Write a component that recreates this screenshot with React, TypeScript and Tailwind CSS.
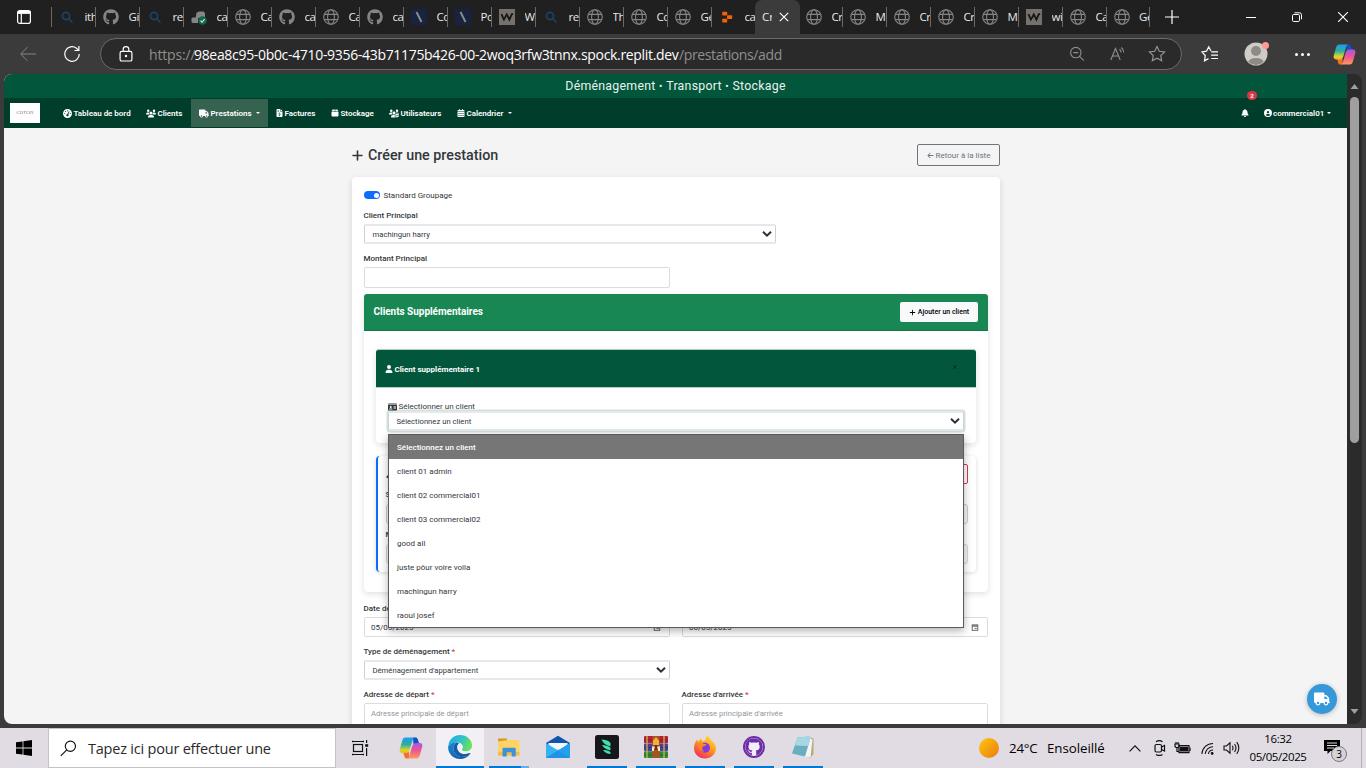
import React from 'react';
import {
  FaPlus, FaArrowLeft, FaTruck, FaGaugeHigh, FaUsers, FaFileInvoiceDollar, FaBox,
  FaUsersGear, FaCalendarDays, FaBell, FaCircleUser, FaUser, FaIdCard, FaGithub,
} from 'react-icons/fa6';

const UI = "font-['Open_Sans','Noto_Sans',sans-serif]";

/* ---------- browser icons ---------- */

function Globe() {
  return (
    <svg viewBox="0 0 16 16" className="size-4" fill="none" stroke="#858585" strokeWidth="1.1">
      <circle cx="8" cy="8" r="7.3" />
      <ellipse cx="8" cy="8" rx="3.4" ry="7.3" />
      <path d="M1.4 5.4h13.2M1.4 10.6h13.2" />
    </svg>
  );
}

function Search() {
  return (
    <svg viewBox="0 0 16 16" className="size-4" fill="none" stroke="#1d4468" strokeWidth="1.6">
      <circle cx="7" cy="7" r="3.6" />
      <path d="M9.7 9.7 13 13" strokeLinecap="round" />
    </svg>
  );
}

function Slash() {
  return (
    <svg viewBox="0 0 16 16" className="size-4">
      <rect width="16" height="16" fill="#17233f" />
      <path d="M5.5 3 10.5 13" stroke="#8a8a86" strokeWidth="1.9" />
    </svg>
  );
}

function Wave() {
  return (
    <svg viewBox="0 0 16 16" className="size-4">
      <rect width="16" height="16" fill="#74726b" />
      <path d="M2.4 5.2 4.9 10.6 7.8 5.4 10.4 10.6 12.8 5.2h1.4" fill="none" stroke="#161616" strokeWidth="1.8" />
    </svg>
  );
}

function Checked() {
  return (
    <svg viewBox="0 0 16 16" className="size-4">
      <path d="M5.500 3.800 8 2.600h4.500L14 4v5H7v5H1.500L.5 13V9.500l1-1h3.200z" fill="#858585" />
      <circle cx="11.500" cy="11.500" r="4.300" fill="#11694a" />
      <path d="m9.500 11.600 1.500 1.500 2.600-3" fill="none" stroke="#d5e5dd" strokeWidth="1.1" />
    </svg>
  );
}

function Replit() {
  return (
    <svg viewBox="0 0 16 16" className="size-4" fill="#f26207">
      <rect x="3.2" y="2.8" width="5" height="3.6" rx=".7" />
      <rect x="8" y="6.3" width="5.2" height="3.6" rx=".7" />
      <rect x="3.2" y="9.8" width="5" height="3.6" rx=".7" />
    </svg>
  );
}

function TabIcon({ kind }: { kind: string }) {
  if (kind === 'globe') return <Globe />;
  if (kind === 'search') return <Search />;
  if (kind === 'github') return <FaGithub className="size-4 text-[#858585]" />;
  if (kind === 'slash') return <Slash />;
  if (kind === 'wave') return <Wave />;
  if (kind === 'check') return <Checked />;
  return <Replit />;
}

const tabsLeft = [
  ['search', 'ith'], ['github', 'Git'], ['search', 're'], ['check', 'ca'], ['globe', 'Ca'], ['github', 'ca'],
  ['globe', 'Ca'], ['github', 'ca'], ['slash', 'Co'], ['slash', 'Po'], ['wave', 'W'], ['search', 're'],
  ['globe', 'Th'], ['globe', 'Co'], ['globe', 'Ge'], ['replit', 'ca'],
];
const tabsRight = [
  ['globe', 'Cr'], ['globe', 'M'], ['globe', 'Cr'], ['globe', 'Cr'], ['globe', 'M'], ['wave', 'wi'], ['globe', 'Ca'], ['globe', 'Ge'],
];

function Tab({ kind, label, bar = true, width = 'w-11' }: { kind: string; label: string; bar?: boolean; width?: string }) {
  return (
    <div className={`flex h-full shrink-0 items-center overflow-hidden pl-[7px] ${width}`}>
      <span className="size-4 shrink-0"><TabIcon kind={kind} /></span>
      <span className="ml-[9.500px] min-w-0 flex-1 overflow-hidden whitespace-nowrap text-[11.500px] leading-4 tracking-[-0.4px] text-[#e8e8e8]">{label}</span>
      {bar && <span className="h-5 w-px shrink-0 bg-[#6a6a6a]" />}
    </div>
  );
}

function TabStrip() {
  return (
    <div className={`flex h-[34px] items-center bg-[#202020] ${UI}`}>
      <svg viewBox="0 0 16 16" className="ml-4 size-4" fill="none" stroke="#fff" strokeWidth="1.2">
        <rect x="1.6" y="1.6" width="12.8" height="12.8" rx="2.2" />
        <path d="M1.6 3.4h12.8" strokeWidth="3" />
        <path d="M5.3 4v10" />
      </svg>
      <span className="ml-[19px] h-5 w-px bg-[#6a6a6a]" />
      <div className="flex h-full">
        {tabsLeft.map(([k, l], i) => <Tab key={i} kind={k} label={l} bar={i < 15} width={i < 15 ? 'w-11' : 'w-[43px]'} />)}
      </div>
      <div className="flex h-full w-[45px] items-center rounded-t-[7px] bg-[#3b3b3b] pl-[7px]">
        <span className="w-[10px] overflow-hidden whitespace-nowrap text-[11.500px] text-[#e8e8e8]">Cr</span>
        <svg viewBox="0 0 10 10" className="ml-[7px] size-[10px]" stroke="#fff" strokeWidth="1.2"><path d="m.8.8 8.4 8.4M9.2.8.8 9.2" /></svg>
      </div>
      <div className="flex h-full -ml-px">
        {tabsRight.map(([k, l], i) => <Tab key={i} kind={k} label={l} width={i < 6 ? 'w-11' : 'w-[43.500px]'} />)}
      </div>
      <svg viewBox="0 0 14 14" className="ml-[15px] size-[14px]" stroke="#fff" strokeWidth="1.2"><path d="M7 0v14M0 7h14" /></svg>
      <svg viewBox="0 0 10 10" className="ml-[67px] size-[10px]" stroke="#fff" strokeWidth="1"><path d="M0 5.500h10" /></svg>
      <svg viewBox="0 0 10 10" className="ml-[36px] size-[10px]" fill="none" stroke="#fff" strokeWidth="1">
        <rect x=".5" y="2.500" width="7" height="7" rx="1.2" />
        <path d="M2.500.8h5a2 2 0 0 1 2 2v4.500" />
      </svg>
      <svg viewBox="0 0 10 10" className="ml-[36px] size-[10px]" stroke="#fff" strokeWidth="1.1"><path d="m0 0 10 10M10 0 0 10" /></svg>
    </div>
  );
}

function Copilot({ id, className }: { id: string; className: string }) {
  return (
    <svg viewBox="0 0 24 24" className={className}>
      <defs>
        <linearGradient id={`${id}a`} x1="0" y1="0" x2="0" y2="1">
          <stop offset="0" stopColor="#1f9cf0" /><stop offset=".45" stopColor="#2fae9d" /><stop offset=".8" stopColor="#d8d62c" /><stop offset="1" stopColor="#f5b51c" />
        </linearGradient>
        <linearGradient id={`${id}b`} x1="0" y1="0" x2="0" y2="1">
          <stop offset="0" stopColor="#a855e8" /><stop offset=".5" stopColor="#f0568c" /><stop offset="1" stopColor="#fb9c5c" />
        </linearGradient>
      </defs>
      <path d="M14 1.500h2.700c1 0 1.700.7 2 1.700L20.400 8h-6z" fill="#1450c0" />
      <path d="M10 22.500H7.500c-1 0-1.700-.7-2-1.700L4 16h6z" fill="#f2702c" />
      <path d="M6.500 1.500h9.200c-1.200.5-1.700 1.700-2.200 3.300l-2.600 8.700c-.7 2.300-1.700 3.600-4 3.600H3.200c-2.200 0-3-1.900-2.400-4L3.200 4.700c.6-2 1.500-3.200 3.300-3.200z" fill={`url(#${id}a)`} />
      <path d="M17.500 22.500H8.300c1.200-.5 1.700-1.700 2.200-3.300l2.600-8.700c.7-2.300 1.700-3.600 4-3.600h3.700c2.200 0 3 1.900 2.400 4l-2.400 8.400c-.6 2-1.500 3.200-3.300 3.200z" fill={`url(#${id}b)`} />
    </svg>
  );
}

const STAR = 'M9 1.400 11.300 6.200 16.600 6.900 12.700 10.600 13.700 15.800 9 13.200 4.300 15.800 5.300 10.600 1.400 6.900 6.700 6.200z';

function Toolbar() {
  return (
    <div className={`flex h-10 items-center bg-[#3b3b3b] ${UI}`}>
      <svg viewBox="0 0 16 16" className="ml-5 size-4" fill="none" stroke="#858585" strokeWidth="1"><path d="M16 8H1M7.500 1.200.700 8l6.800 6.800" /></svg>
      <svg viewBox="0 0 18 18" className="ml-[27px] size-[18px]" fill="none" stroke="#fff" strokeWidth="1.200">
        <path d="M16.300 9A7.300 7.300 0 1 1 13.500 3.300L15.800 5.400" /><path d="M15.900 1v4.500h-4.500" />
      </svg>
      <div className="ml-[19px] flex h-8 w-[1082px] items-center rounded-full border border-[#6b6b6b] bg-[#2a2a2a]">
        <svg viewBox="0 0 14 16" className="ml-[18px] h-4 w-[14px]" fill="none" stroke="#fff" strokeWidth="1.200">
          <rect x="1.100" y="5.300" width="11.800" height="9.700" rx="1.600" />
          <path d="M4.200 5.300V3.200a2.800 2.600 0 0 1 5.600 0v2.100" />
          <circle cx="7" cy="10" r=".6" fill="#fff" />
        </svg>
        <div className="ml-[16px] flex w-[900px] whitespace-nowrap text-[14px] text-[#8f8f8f]">
          <span className="w-[45px] tracking-[-0.15px]">https://</span>
          <span className="w-[485px] tracking-[-0.320px] text-white">98ea8c95-0b0c-4710-9356-43b71175b426-00-2woq3rfw3tnnx.spock.replit.dev</span>
          <span className="tracking-[-0.380px]">/prestations/add</span>
        </div>
        <svg viewBox="0 0 16 16" className="ml-[20px] size-4 shrink-0" fill="none" stroke="#8f8f8f" strokeWidth="1.100">
          <circle cx="6.800" cy="6.600" r="5.200" /><path d="m10.600 10.400 4.200 4.200M4.300 6.600h5" />
        </svg>
        <svg viewBox="0 0 16 16" className="ml-[25px] size-4 shrink-0" fill="none" stroke="#8f8f8f" strokeWidth="1.100">
          <path d="M.8 14 5.500 2.500 10.200 14M2.400 10h6.200M9.500 3.300c1 .8 1.500 2 1.500 3.200M11.300 1.500c1.600 1.300 2.400 3 2.400 5" />
        </svg>
        <svg viewBox="0 0 18 18" className="ml-[22px] size-[18px] shrink-0" fill="none" stroke="#9a9a9a" strokeWidth="1.100"><path d={STAR} /></svg>
      </div>
      <svg viewBox="0 0 18 18" className="ml-[19px] size-[18px]" fill="none" stroke="#fff" strokeWidth="1.200">
        <path d="M10 6 7.700 1.800 5.500 6.200.900 6.900 4.300 10.500 3.500 15.800 7.500 13.600M10.200 6.900h6.800M10.200 10.200h6.800M10.200 13.500h6.800" />
      </svg>
      <div className="relative ml-[25px] size-6">
        <svg viewBox="0 0 24 24" className="size-6">
          <circle cx="12" cy="12" r="11.500" fill="#cfccc8" />
          <circle cx="12" cy="9" r="5" fill="#8e8b87" />
          <path d="M4.200 20a8 5 0 0 1 15.600 0A11.500 11.500 0 0 1 4.200 20z" fill="#8e8b87" />
        </svg>
        <span className="absolute -right-[1px] top-0 size-[7px] rounded-full bg-[#ff9b94]" />
      </div>
      <div className="ml-[27px] flex gap-[3px]">
        <span className="size-[3px] rounded-full bg-white" /><span className="size-[3px] rounded-full bg-white" /><span className="size-[3px] rounded-full bg-white" />
      </div>
      <Copilot id="top" className="ml-[23px] size-[23px]" />
    </div>
  );
}

/* ---------- web page ---------- */

function NavItem({ icon, label, width, caret, active, gap = 'gap-[1.500px]' }: { icon: React.ReactNode; label: string; width: string; caret?: boolean; active?: boolean; gap?: string }) {
  return (
    <div className={`flex h-[28px] shrink-0 items-center whitespace-nowrap pl-2 ${width} ${gap} ${active ? 'bg-[#36634f]' : ''}`}>
      {icon}
      <span className="pt-px">{label}</span>
      {caret && <span className="ml-[3px] border-x-2 border-t-2 border-x-transparent border-t-white" />}
    </div>
  );
}

function SelectBox({ value, className }: { value: string; className: string }) {
  return (
    <div className={`flex h-5 items-center justify-between rounded-[2px] border-x border-y-2 border-x-[#cdd1d8] border-y-[#e7e8ee] bg-white pl-[7.500px] pr-[3px] text-[7.700px] ${className}`}>
      <span className="pt-px">{value}</span>
      <svg viewBox="0 0 10 8" className="h-2 w-[10px]" fill="none" stroke="#2b3035" strokeWidth="2"><path d="m1 1.700 4 4 4-4" /></svg>
    </div>
  );
}

function Label({ children, required, className = '' }: { children: React.ReactNode; required?: boolean; className?: string }) {
  return (
    <div className={`h-3 whitespace-nowrap font-medium leading-[14px] -ml-[0.5px] ${className}`}>
      {children}{required && <span className="text-[#dc3545]"> *</span>}
    </div>
  );
}

function CalendarGlyph() {
  return (
    <svg viewBox="0 0 8 8" className="h-[7px] w-2" fill="none" stroke="#555" strokeWidth="1">
      <rect x=".8" y="1" width="6.400" height="6.200" /><path d="M.8 2.300h6.400" strokeWidth="1.400" /><path d="M3.500 5h2.500" />
    </svg>
  );
}

function DateInput({ value }: { value: string }) {
  return (
    <div className="flex h-5 w-[306px] items-center justify-between rounded-[2px] border border-[#dcdcdc] bg-white pl-[6px] pr-2">
      <span className="pt-px">{value}</span><CalendarGlyph />
    </div>
  );
}

const options = ['client 01 admin', 'client 02 commercial01', 'client 03 commercial02', 'good all', 'juste pôur voire voila', 'machingun harry', 'raoul josef'];

function Dropdown() {
  return (
    <div className="absolute left-0 top-[23px] z-10 h-[194px] w-[576px] border border-[#5a5a5a] bg-white shadow-[0_3px_8px_rgba(0,0,0,0.3)]">
      <div className="flex h-[24px] items-center bg-[#767676] pl-2 pt-px font-medium text-white">Sélectionnez un client</div>
      {options.map((o) => <div key={o} className="flex h-6 items-center pl-2 pt-[2px]">{o}</div>)}
    </div>
  );
}

function ExtraClients() {
  return (
    <section className="mt-[6px] h-[298px] rounded-[4px] bg-white shadow-[0_2px_6px_rgba(0,0,0,0.13)]">
      <div className="flex h-[37px] items-center justify-between rounded-t-[3px] border-b border-[#157347] bg-[#198754] pl-[9.500px] pr-[10px]">
        <h2 className="pb-px text-[10px] font-bold tracking-[-0.03px] text-white">Clients Supplémentaires</h2>
        <button className="flex h-5 w-[78px] items-center justify-center gap-[2px] whitespace-nowrap rounded-[2px] bg-[#f8f9fa] text-[7px] font-medium text-black">
          <FaPlus className="size-[7px]" />Ajouter un client
        </button>
      </div>
      <div className="px-3 pt-[18px]">
        <div className="h-[94px] rounded-[4px] bg-white shadow-[0_2px_6px_rgba(0,0,0,0.13)]">
          <div className="flex h-[39px] items-center justify-between rounded-t-[3px] border-y border-[#b3cdc4] bg-[#02563b] pl-[9px] pr-[19px] text-white">
            <div className="flex items-center gap-[1.500px] pt-px font-bold"><FaUser className="size-[8px]" /><span className="pt-px">Client supplémentaire 1</span></div>
            <svg viewBox="0 0 4 4" className="mb-1 size-1" stroke="#0c2c20" strokeWidth="1"><path d="m0 0 4 4M4 0 0 4" /></svg>
          </div>
          <div className="px-3 pt-[11px]">
            <div className="flex h-3 items-center gap-[1.500px] pt-[3px]"><FaIdCard className="h-[8px] w-[9px]" />Sélectionner un client</div>
            <div className="relative">
              <SelectBox value="Sélectionnez un client" className="w-[576px] shadow-[0_0_0_1.500px_rgba(2,86,59,0.18)]" />
              <Dropdown />
            </div>
          </div>
        </div>
        <div className="mt-[13px] h-[116px] rounded-[4px] border-l-2 border-[#0d6efd] bg-white pl-[8px] pr-2 pt-2 shadow-[0_1px_4px_rgba(0,0,0,0.15)]">
          <div className="flex h-5 items-center justify-between">
            <FaUser className="size-[8px]" />
            <span className="h-5 w-16 rounded-[2px] border border-[#dc3545]" />
          </div>
          <Label className="mt-1">Sélectionner</Label>
          <div className="mt-1 h-5 rounded-[3px] border border-[#c9ccd1] bg-[#f5f5f5]" />
          <Label className="mt-1">Montant</Label>
          <div className="mt-1 h-5 rounded-[3px] border border-[#d5d5d5] bg-[#f5f5f5]" />
        </div>
      </div>
    </section>
  );
}

function WebPage() {
  return (
    <div className="h-[650px] w-[1343px] overflow-hidden rounded-bl-lg rounded-tl-lg bg-[#f4f4f4] font-[Roboto,sans-serif] text-[8px] text-[#33373b]">
      <div className="flex h-6 items-center justify-center bg-[#02563b] text-[12.300px] tracking-[0.28px] text-[#e9f3ee]">
        Déménagement<span className="mx-[3.500px] text-[10px]">•</span>Transport<span className="mx-[3.500px] text-[10px]">•</span>Stockage
      </div>
      <nav className="flex h-[30px] items-center bg-[#003d2a] pl-[6px] font-semibold tracking-[-0.02px] text-white">
        <div className="flex h-5 w-[30px] items-center justify-center bg-white">
          <span className="font-['Liberation_Serif',serif] text-[5px] font-normal text-[#8c7f7c] blur-[0.4px]">COTON</span>
        </div>
        <NavItem icon={<FaGaugeHigh className="size-[9px]" />} label="Tableau de bord" width="ml-[15px] w-[83px]" />
        <NavItem icon={<FaUsers className="h-[9px] w-[10px]" />} label="Clients" width="w-[53px]" />
        <NavItem icon={<FaTruck className="h-[9px] w-[10px]" />} label="Prestations" width="w-[77px]" caret active />
        <NavItem icon={<FaFileInvoiceDollar className="h-[8px] w-[7px]" />} label="Factures" width="w-[55px]" />
        <NavItem icon={<FaBox className="size-[8px]" />} label="Stockage" width="w-[58px]" />
        <NavItem icon={<FaUsersGear className="h-[9px] w-[10px]" />} label="Utilisateurs" width="w-[68px]" />
        <NavItem icon={<FaCalendarDays className="size-[8px]" />} label="Calendrier" width="w-[70px]" caret />
        <div className="relative ml-auto">
          <FaBell className="size-[8px]" />
          <span className="absolute left-[6px] -top-[18px] flex h-[9px] w-[10px] items-center justify-center rounded-full bg-[#dc3545] text-[6px] font-bold">2</span>
        </div>
        <NavItem icon={<FaCircleUser className="mr-px size-[8px]" />} label="commercial01" width="ml-[7px] w-[91px]" caret gap="gap-0" />
      </nav>
      <main className="ml-[348px] w-[648px] pt-4">
        <div className="flex h-[22px] items-center justify-between">
          <h1 className="flex items-center gap-[4px] whitespace-nowrap pt-px text-[14.300px] font-medium -ml-px"><FaPlus className="size-[13px]" />Créer une prestation</h1>
          <button className="flex h-[22px] w-[83px] items-center justify-center gap-[2px] whitespace-nowrap rounded-[2px] border border-[#6c757d] pt-px text-[#6c757d]"><FaArrowLeft className="size-[7px]" />Retour à la liste</button>
        </div>
        <div className="mt-[11px] h-[560px] rounded-[4px] bg-white px-3 pt-[10px] shadow-[0_2px_6px_rgba(0,0,0,0.13)]">
          <div className="flex h-4 items-center gap-[3.500px]">
            <span className="flex h-[8px] w-4 items-center justify-end rounded-full bg-[#0d6efd] pr-[1.500px]"><span className="size-[5px] rounded-full bg-white" /></span>
            <span className="pt-[1.500px]">Standard Groupage</span>
          </div>
          <Label className="mt-[6px]">Client Principal</Label>
          <SelectBox value="machingun harry" className="mt-[3px] w-[412px]" />
          <Label className="mt-2">Montant Principal</Label>
          <div className="mt-[3px] h-[21px] w-[306px] rounded-[2px] border border-[#dcdcdc]" />
          <ExtraClients />
          <Label className="mt-[10px]" required>Date de début</Label>
          <div className="mt-[3px] flex gap-3"><DateInput value="05/05/2025" /><DateInput value="06/05/2025" /></div>
          <Label className="mt-2" required>Type de déménagement</Label>
          <SelectBox value="Déménagement d'appartement" className="mt-[3px] w-[306px]" />
          <div className="mt-2 flex gap-3">
            {[['Adresse de départ', 'Adresse principale de départ'], ["Adresse d'arrivée", "Adresse principale d'arrivée"]].map(([l, p]) => (
              <div key={l} className="w-[306px]">
                <Label required>{l}</Label>
                <div className="mt-[3px] h-10 rounded-[2px] border border-[#dcdcdc] pl-[6px] text-[7.700px] leading-[19px] text-[#92969b]">{p}</div>
              </div>
            ))}
          </div>
        </div>
      </main>
    </div>
  );
}

function Scrollbar() {
  return (
    <div className="flex h-[650px] w-[15px] flex-col items-center rounded-r-lg bg-[#2b2b2b]">
      <svg viewBox="0 0 8 5" className="mt-[10px] h-[5px] w-[9px] shrink-0 fill-[#a0a0a0]"><path d="M4 0 8 5H0z" /></svg>
      <div className="mt-2 h-[346px] w-[9px] rounded-full bg-[#9f9f9f]" />
      <svg viewBox="0 0 8 5" className="mb-[10px] mt-auto h-[5px] w-[9px] shrink-0 fill-[#a0a0a0]"><path d="M4 5 8 0H0z" /></svg>
    </div>
  );
}

function HelpBubble() {
  return (
    <div className="absolute left-[1307px] top-[684px] flex size-[30px] items-center justify-center rounded-full bg-[#3498db] shadow-[0_1px_5px_rgba(0,0,0,0.25)]">
      <FaTruck className="size-4 text-white" />
    </div>
  );
}

/* ---------- taskbar ---------- */

function EdgeIcon() {
  return (
    <svg viewBox="0 0 24 24" className="size-6">
      <defs>
        <linearGradient id="eg" x1="0" y1="0" x2="1" y2=".3"><stop offset="0" stopColor="#1fa9e8" /><stop offset=".6" stopColor="#2fc3c9" /><stop offset="1" stopColor="#68e05a" /></linearGradient>
        <linearGradient id="eb" x1="0" y1="0" x2="1" y2="1"><stop offset="0" stopColor="#1a8ad8" /><stop offset="1" stopColor="#0f4f96" /></linearGradient>
      </defs>
      <path d="M.3 10.500C1.100 4.400 6 0 12 0c7 0 12 5 12 10.500 0 3.600-2.800 6-6.200 6-2.800 0-4-1-4-1.900 0-.7.9-1 .9-2.700C14.700 9.500 12.500 7.500 9 7.500c-4 0-7.300 1.500-8.700 3z" fill="url(#eg)" />
      <path d="M.1 11.500C1.200 8.800 5 7.300 8.700 7.400c-2.200 1-3.400 3.200-3.400 6 0 4.800 4 8.600 9 8.600 3 0 5.200-.8 7.700-2.700C19.800 22.400 16 24 12 24 5 24-.2 18.500.1 11.500z" fill="url(#eb)" />
      <path d="M8.700 7.400c-2.200 1-3.400 3.200-3.400 6 0 4.800 4 8.600 9 8.600 3.200 0 6-1.200 8-3.300.3-.5 0-.8-.6-.6-6.200 2.300-12.400-.8-12.400-6 0-1.800.8-3 1.900-3.700-.8-.7-1.600-1-2.500-1z" fill="#135ea8" />
      <path d="M9.300 12.100c0-1.800.8-3 1.900-3.700 2 .4 3.500 1.900 3.500 3.500 0 1.700-.9 2-.9 2.700 0 .9 1.200 1.900 4 1.900 1.500 0 2.700-.4 3.800-1.100-1 2.600-3.800 3.600-6 3.600-3.600 0-6.300-3.200-6.300-6.900z" fill="#f3f0f5" />
    </svg>
  );
}

function FolderIcon() {
  return (
    <svg viewBox="0 0 24 24" className="size-6">
      <path d="M1 3.500h9v3H1z" fill="#d99a1c" /><path d="M1 6.500 11.500 5h11v15.500H1z" fill="#fcd364" />
      <path d="M1 17h21.500v3.500H1z" fill="#f3bd45" /><path d="M5.500 21.500v-7.700c0-.6.400-1 1-1h11.200c.6 0 1 .4 1 1v7.700h-4v-4.300h-5v4.300z" fill="#3c92d8" />
    </svg>
  );
}

function MailIcon() {
  return (
    <svg viewBox="0 0 24 24" className="size-6">
      <path d="M0 8 12 .8 24 8v4H0z" fill="#0f56a8" /><path d="M2.500 8h19v6H2.500z" fill="#f4f7fb" />
      <path d="M0 8v15h24V8l-12 7.500z" fill="#35b2f0" /><path d="M0 23 12 15.500 24 23z" fill="#2390df" /><path d="M24 8 0 23h24z" fill="#1c96e6" opacity=".65" />
    </svg>
  );
}

function LeafIcon() {
  return (
    <svg viewBox="0 0 24 24" className="size-6">
      <rect width="24" height="24" rx="2.500" fill="#15171a" />
      <path d="M6.500 4.500c3 .2 7 .8 9 3.500v3.200c-3.600-.5-7-2.400-9-6.700zM7 10c3 .2 6.700.6 8.500 2.800v2.500C12 15 9 13.500 7 10zM8 15c3 0 5.700.3 7.500 2.200V19C12.600 18.800 9.800 17.600 8 15z" fill="#3fdfae" />
    </svg>
  );
}

function RarIcon() {
  return (
    <svg viewBox="0 0 24 24" className="size-6">
      <rect x="0" y="1" width="24" height="7.300" rx="1" fill="#b3203c" /><rect x="0" y="8.600" width="24" height="7.300" rx="1" fill="#4a3fa0" /><rect x="0" y="16.200" width="24" height="6.800" rx="1" fill="#2d8b38" />
      <path d="M0 5h24M0 12.500h24M0 20h24" stroke="#222" strokeWidth=".7" opacity=".5" />
      <path d="M3 1v22M20 1v22" stroke="#d9b43e" strokeWidth="1.300" />
      <rect x="8.300" y="1" width="7.400" height="22" fill="#a9541d" />
      <path d="M9 5.500 12 2l3 3.500V10H9z" fill="#f0b03c" /><path d="M8 11.500h8V16h-2v-2.500h-4V16H8z" fill="#f3ead6" /><rect x="10.700" y="10" width="2.600" height="5" fill="#6d3310" />
    </svg>
  );
}

function FirefoxIcon() {
  return (
    <svg viewBox="0 0 24 24" className="size-6">
      <defs><linearGradient id="ff" x1=".8" y1="0" x2=".2" y2="1"><stop offset="0" stopColor="#ffe23a" /><stop offset=".45" stopColor="#ff9a1f" /><stop offset="1" stopColor="#f0255c" /></linearGradient></defs>
      <path d="M14.500.5c1.500 1.300 2.600 2.800 3.300 4.500.8.300 1.500 1 1.700 1.800C22 9 23 11 23 13.200 23 19 18.200 23.500 12 23.500S1 19 1 13c0-3.300 1.200-6 3-8.500l1 2.300L8 3.500c.2 1.200.7 2 1.500 2.500C11 6 12 5.700 12.500 4.500c.3-1.500 1-3 2-4z" fill="url(#ff)" />
      <circle cx="12" cy="12.800" r="5" fill="#8439e0" /><path d="M5 8.500c2-1.200 4-1 5.500.3 1.200.2 2.500.3 3 1-1.200 1.600-3.800 1-4.300 3-.3 1.600.6 3 2.300 3.700C8 17 5 13.500 5 8.500z" fill="#ff8a1c" />
    </svg>
  );
}

function NotepadIcon() {
  return (
    <svg viewBox="0 0 24 24" className="size-6">
      <path d="m18.500 2.500 4 1V19l-3.500 4-4-2z" fill="#b9a878" />
      <path d="m17 2 4.500 2.500-2 18-9.500-2z" fill="#f2f4f5" />
      <path d="M6.500 2.500 18 1.500c1.300 0 1.700.7 1.300 1.800L14.500 20c-.3 1-1 1.400-2 1.200L1 18.500z" fill="#6aaebf" />
      <path d="M6.500 2.500 18 1.500c1.300 0 1.700.7 1.300 1.800L17 11 4 10.500z" fill="#a5d8e2" />
    </svg>
  );
}

const apps: [React.ReactNode, string, string][] = [
  [<EdgeIcon />, 'bg-[#f3f0f5]', 'w-12 bg-[#0078d7]'],
  [<FolderIcon />, '', 'w-10 bg-[linear-gradient(90deg,#0078d7_80%,#68aee8_80%)]'],
  [<MailIcon />, '', 'w-10'],
  [<LeafIcon />, '', 'w-10 bg-[#0078d7]'],
  [<RarIcon />, '', 'w-10 bg-[#0078d7]'],
  [<FirefoxIcon />, '', 'w-10 bg-[#0078d7]'],
  [<span className="flex size-[22px] items-center justify-center rounded-full border-2 border-[#6e2fa6] bg-[#f4eefa]"><FaGithub className="size-[18px] text-[#6e2fa6]" /></span>, '', 'w-10 bg-[#0078d7]'],
  [<NotepadIcon />, '', 'w-10 bg-[#0078d7]'],
];

function Taskbar() {
  return (
    <div className={`flex h-10 items-center bg-[#e1dce3] text-black ${UI}`}>
      <svg viewBox="0 0 16 16" className="ml-4 size-4 shrink-0"><path d="M0 2.300 6.600 1.400v6.200H0zM7.400 1.300 16 0v7.600H7.400zM0 8.400h6.600v6.200L0 13.700zM7.400 8.400H16V16l-8.600-1.300z" /></svg>
      <div className="ml-4 flex h-10 w-[288px] shrink-0 items-center border border-[#c4c2c6] bg-white">
        <svg viewBox="0 0 18 18" className="ml-[11px] size-[17px]" fill="none" stroke="#111" strokeWidth="1.200"><circle cx="11" cy="6.600" r="5.400" /><path d="M7.200 10.400.8 16.900" /></svg>
        <span className="ml-[11px] whitespace-nowrap pt-px text-[14.500px] tracking-[-0.21px] text-[#2a2a2a]">Tapez ici pour effectuer une</span>
      </div>
      <svg viewBox="0 0 17 16" className="ml-[16px] h-4 w-[17px] shrink-0" fill="none" stroke="#111" strokeWidth="1.200">
        <rect x="1.500" y="4.500" width="9" height="7" /><path d="M.6 2.300V.8M.6 1.500h10.800M11.400.8v1.500M.6 13.700v1.500M.6 14.500h10.800M11.400 13.700v1.500M14.600 0v3M14.600 8v8" /><path d="M13.200 5.500h3" strokeWidth="2.600" />
      </svg>
      <Copilot id="task" className="ml-[30px] size-6 shrink-0" />
      <div className="ml-[13px] flex shrink-0 gap-px">
        {apps.map(([icon, bg, line], i) => (
          <div key={i} className={`flex h-10 w-12 flex-col items-center justify-end ${bg}`}>
            <div className="flex h-[38px] items-center">{icon}</div>
            <div className={`h-[2px] ${line}`} />
          </div>
        ))}
      </div>
      <span className="ml-[152px] size-5 shrink-0 rounded-full bg-[linear-gradient(135deg,#fdc70c,#ed7a10)]" />
      <span className="ml-[10px] w-[38px] shrink-0 whitespace-nowrap pt-px text-[13.300px] tracking-[-0.2px]">24°C</span>
      <span className="w-[80px] shrink-0 whitespace-nowrap pt-px text-[13.300px] tracking-[-0.05px]">Ensoleillé</span>
      <svg viewBox="0 0 12 7" className="ml-[2px] h-[7px] w-3 shrink-0" fill="none" stroke="#111" strokeWidth="1.200"><path d="m.6 6.300 5.400-5.400 5.400 5.400" /></svg>
      <svg viewBox="0 0 12 16" className="ml-[13px] h-4 w-3 shrink-0" fill="none" stroke="#111" strokeWidth="1.200">
        <rect x="1" y="4.500" width="6.500" height="7.500" rx="1.500" /><path d="m7.500 7 3-1.500v5.500l-3-1.500M2 1.800C4 .4 6.500.4 8.500 1.800M2 14.500c2 1.200 4.500 1.200 6.500 0" />
      </svg>
      <svg viewBox="0 0 17 14" className="ml-[8px] h-[14px] w-[17px] shrink-0" fill="none" stroke="#111" strokeWidth="1.200">
        <path d="M5 4.600h10v7H5z" /><path d="M6.500 6.300h7v3.700h-7z" fill="#111" /><path d="M16 6.500v3.500" /><path d="M1 3h4v2.500L4 6.500H2L1 5.500zM2 1v2M4 1v2M3 6.500v4h2" />
      </svg>
      <svg viewBox="0 0 14 14" className="ml-[10px] size-[13px] shrink-0" fill="none" stroke="#111" strokeWidth="1.100">
        <path d="M1 13A12 12 0 0 1 13 1.500M4.500 13A8.500 8.500 0 0 1 13 5M8 13a5 5 0 0 1 5-4.500" /><circle cx="12" cy="12.300" r="1" fill="#111" />
      </svg>
      <svg viewBox="0 0 17 14" className="ml-[9px] h-[14px] w-[17px] shrink-0" fill="none" stroke="#111" strokeWidth="1.100">
        <path d="M1 5h2.500L7 1.800v10.400L3.500 9H1zM9.300 4.800c.9 1.300.9 3.100 0 4.400M11.500 3c1.800 2.400 1.800 5.600 0 8M13.700 1.200c2.600 3.500 2.600 8.100 0 11.600" />
      </svg>
      <div className="ml-[8px] flex w-[60px] shrink-0 flex-col items-center text-[11.500px] leading-[18px] tracking-[-0.4px]"><span>16:32</span><span className="whitespace-nowrap">05/05/2025</span></div>
      <div className="relative ml-[16px] h-5 w-6 shrink-0">
        <svg viewBox="0 0 16 16" className="size-4"><path d="M0 2h16v11H6.500L3.500 16v-3H0z" /><path d="M3 5h10M3 7.500h10M3 10h7" stroke="#e1dce3" strokeWidth="1" /></svg>
        <span className="absolute left-[7px] top-2 flex size-4 items-center justify-center rounded-full border border-[#777] bg-[#d6d2d8] text-[10px]">3</span>
      </div>
      <span className="ml-auto mr-1 h-10 w-px bg-[#b5b0b7]" />
    </div>
  );
}

export default function App() {
  return (
    <div className="relative h-[768px] w-[1366px] overflow-hidden bg-[#3b3b3b]">
      <TabStrip />
      <Toolbar />
      <div className="flex h-[654px] pl-1">
        <WebPage />
        <Scrollbar />
      </div>
      <Taskbar />
      <HelpBubble />
    </div>
  );
}
